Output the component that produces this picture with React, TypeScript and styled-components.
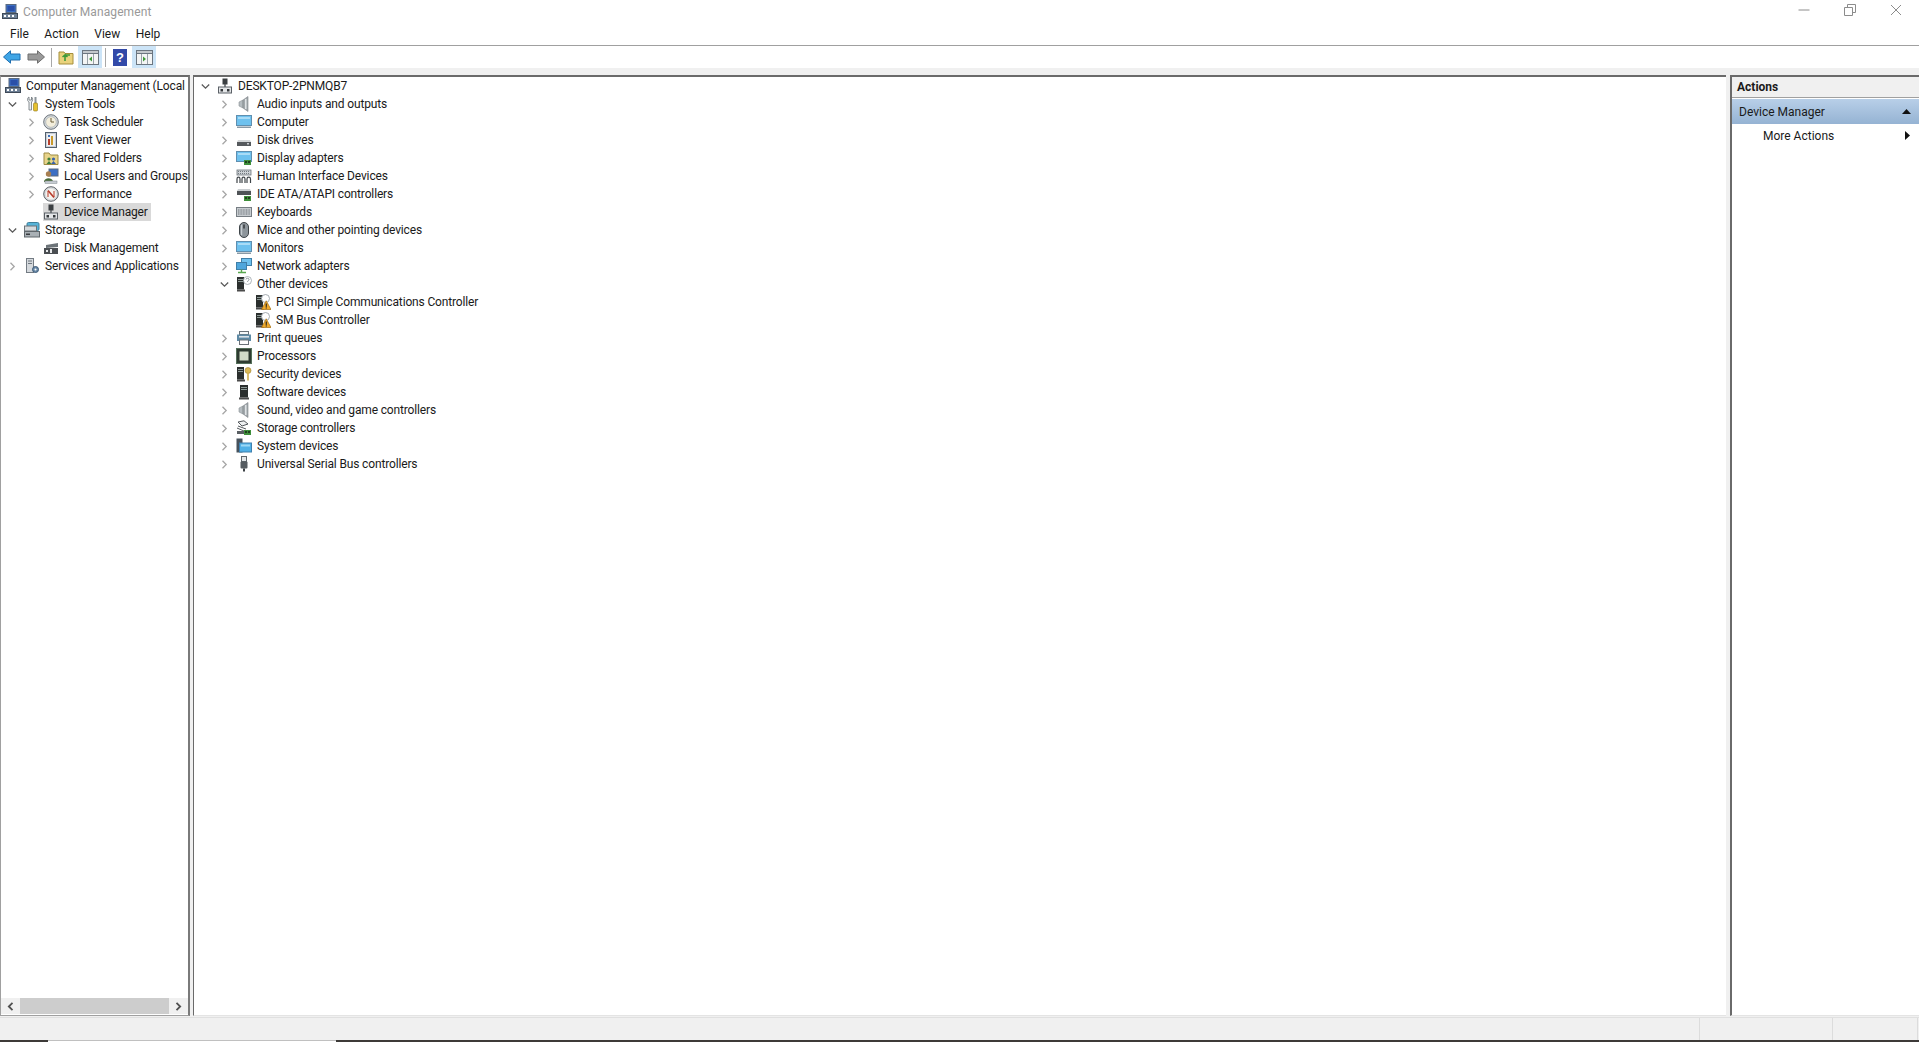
import React from "react"
import styled, { createGlobalStyle } from "styled-components"

const GlobalStyle = createGlobalStyle`
	html, body {
		margin: 0;
		padding: 0;
		background: #ffffff;
		overflow: hidden;
	}
	* {
		box-sizing: border-box;
	}
`

const FONT = `Roboto, "Noto Sans", "Liberation Sans", sans-serif`

/* ---------- icons ---------- */

const Svg = ({ children }: { children: React.ReactNode }) => (
	<svg width="16" height="16" viewBox="0 0 16 16" style={{ flex: "none", display: "block" }}>
		{children}
	</svg>
)

const PcMini = () => (
	<>
		<rect x="4" y="0.5" width="10" height="8" fill="#3c6fc4" stroke="#5a6a80" />
		<rect x="5.5" y="2" width="7" height="5" fill="#2a4fa8" />
		<rect x="0.5" y="9.5" width="15" height="5" fill="#6d7f95" stroke="#3f4a58" />
		<rect x="2" y="11" width="2" height="2" fill="#fff" />
		<rect x="6" y="11" width="2" height="2" fill="#fff" />
		<rect x="10" y="11" width="2" height="2" fill="#fff" />
	</>
)

const Tower = () => (
	<>
		<rect x="1" y="1" width="7" height="12.5" fill="#2b2f2e" />
		<rect x="2" y="3" width="5" height="1" fill="#8d9a96" />
		<rect x="2" y="5" width="5" height="1" fill="#8d9a96" />
		<rect x="1" y="13.5" width="8" height="2" fill="#4b4b4b" />
	</>
)

const Monitor = ({ stand = true }: { stand?: boolean }) => (
	<>
		<rect x="0.5" y="1.5" width="15" height="10" fill="#6ec1ee" stroke="#5f8fb0" />
		<rect x="2" y="3" width="12" height="2" fill="#a9dcf7" />
		{stand && <rect x="1" y="12.5" width="14" height="1.5" fill="#8a9aa6" />}
	</>
)

const Chip = () => (
	<>
		<rect x="8" y="10" width="7" height="5" fill="#3e8e3a" />
		<rect x="9" y="11" width="2" height="2" fill="#203f1e" />
		<rect x="12" y="11" width="2" height="2" fill="#203f1e" />
	</>
)

const Speaker = () => (
	<>
		<path d="M3 6 L7 4 L7 12 L3 10 Z" fill="#b5bcc0" stroke="#8b9296" strokeWidth="0.6" />
		<path d="M7 4 L12 0.5 L12 15.5 L7 12 Z" fill="#a2a8ac" stroke="#7d8388" strokeWidth="0.6" />
		<rect x="9" y="3" width="1.5" height="10" fill="#dfe3e5" />
	</>
)

const icons: Record<string, React.ReactNode> = {
	computer: <PcMini />,
	tools: (
		<>
			<path d="M5 1 C3 2 3 5 5 6 L5 14 L7.5 14 L7.5 6 C9 5 9 2 7.5 1 L7.5 4 L5 4 Z" fill="#eceff1" stroke="#6c7378" strokeWidth="0.8" />
			<rect x="10.5" y="1" width="2" height="6" fill="#8c949a" />
			<rect x="9.5" y="7" width="4" height="8" rx="1" fill="#e6c12f" stroke="#8b7417" strokeWidth="0.6" />
		</>
	),
	clock: (
		<>
			<circle cx="8" cy="8" r="7.3" fill="#d3d8dc" stroke="#6f767c" />
			<circle cx="8" cy="8" r="5.3" fill="#f3eedc" stroke="#a3a9ad" strokeWidth="0.6" />
			<path d="M8 4 L8 8 L11 8" fill="none" stroke="#6a5d37" strokeWidth="1" />
		</>
	),
	event: (
		<>
			<rect x="2.5" y="0.5" width="11" height="15" fill="#c9cfd6" stroke="#53606e" />
			<rect x="4" y="2" width="8" height="12" fill="#eef0f2" />
			<rect x="5" y="7" width="2" height="6" fill="#b7402d" />
			<rect x="8" y="4" width="2" height="9" fill="#c99a2c" />
			<rect x="5" y="3" width="2" height="2" fill="#3d6fb8" />
		</>
	),
	shared: (
		<>
			<path d="M1 3 L6 3 L7.5 5 L15 5 L15 14.5 L1 14.5 Z" fill="#e8d48a" stroke="#9c8a45" />
			<circle cx="6" cy="9" r="1.6" fill="#3f7f3a" />
			<circle cx="10.5" cy="9" r="1.6" fill="#3a62a8" />
			<path d="M3.5 14 L6 11 L8.5 14 Z" fill="#3f7f3a" />
			<path d="M8 14 L10.5 11 L13 14 Z" fill="#3a62a8" />
		</>
	),
	users: (
		<>
			<rect x="6" y="1" width="9" height="7" fill="#3c6fc4" stroke="#5a6a80" />
			<circle cx="5.5" cy="6" r="2.7" fill="#a87f51" />
			<path d="M1 14 C1 9 10 9 10 14 Z" fill="#4a6c3a" />
			<rect x="2" y="13" width="12" height="2.4" fill="#c7cdd3" stroke="#7d858c" strokeWidth="0.5" />
		</>
	),
	perf: (
		<>
			<circle cx="8" cy="8" r="7.3" fill="#d9dcde" stroke="#5c6166" />
			<circle cx="8" cy="8" r="5.2" fill="#f6f3ee" />
			<path d="M5 4.5 L11 11.5" stroke="#b53a2a" strokeWidth="1.6" />
			<path d="M5 11 L5 5 M11 11 L11 5" stroke="#b53a2a" strokeWidth="1" />
		</>
	),
	device: (
		<>
			<rect x="5.5" y="0.5" width="5" height="6" fill="#3b3f42" />
			<path d="M8 6 L8 9" stroke="#505458" strokeWidth="1.4" />
			<rect x="1.5" y="9" width="13" height="6" fill="#e4e6e8" stroke="#5b6066" />
			<rect x="3.5" y="11" width="2.5" height="2.5" fill="#33373a" />
			<rect x="10" y="11" width="2.5" height="2.5" fill="#33373a" />
		</>
	),
	storage: (
		<>
			<rect x="3" y="0.5" width="12" height="8" rx="1.5" fill="#56b3d8" stroke="#3f7f9a" />
			<rect x="0.5" y="4" width="12" height="5" fill="#d5d9dc" stroke="#6c7378" />
			<rect x="0.5" y="9.5" width="15" height="5.5" fill="#a9b0b5" stroke="#5f666b" />
			<rect x="2" y="11.5" width="4" height="1.5" fill="#3a3d40" />
		</>
	),
	diskmgmt: (
		<>
			<path d="M3 5 L15 3 L15 7 L3 8 Z" fill="#6c7378" />
			<rect x="1" y="8" width="14" height="6" fill="#4a4e52" />
			<rect x="7" y="9" width="2" height="4" fill="#e8eaec" />
			<rect x="3" y="10" width="2" height="2" fill="#e8eaec" />
		</>
	),
	services: (
		<>
			<rect x="2.5" y="0.5" width="7" height="14" fill="#d5d9dd" stroke="#737b83" />
			<rect x="4" y="2.5" width="4" height="1" fill="#6e767e" />
			<rect x="4" y="5" width="4" height="1" fill="#6e767e" />
			<circle cx="11.5" cy="11.5" r="3" fill="#6a8aa8" stroke="#3d5a78" />
			<circle cx="11.5" cy="11.5" r="1" fill="#fff" />
		</>
	),
	audio: <Speaker />,
	pc: <Monitor />,
	disk: (
		<>
			<path d="M2 8 L14 8 L15 10 L1 10 Z" fill="#d3d6d8" />
			<rect x="1" y="10" width="14" height="4" fill="#55595d" />
			<rect x="11" y="11" width="2" height="1.5" fill="#c8ccd0" />
		</>
	),
	display: (
		<>
			<Monitor stand={false} />
			<Chip />
		</>
	),
	hid: (
		<>
			<rect x="1" y="2" width="14" height="5" fill="#cdd2d6" stroke="#6d747a" strokeWidth="0.8" />
			<path d="M2 3.5 H14 M2 5.5 H14" stroke="#5e656b" strokeWidth="0.8" strokeDasharray="1 1" />
			<path d="M1 15 V11 C1 8.5 4 8.5 4 11 V15 M6 15 V11 C6 8.5 9 8.5 9 11 V15 M11 15 V11 C11 8.5 14.5 8.5 14.5 11 V15" fill="none" stroke="#3f4549" strokeWidth="1.2" />
		</>
	),
	ide: (
		<>
			<path d="M2 3 L14 3 L15 5 L1 5 Z" fill="#c9cdd0" />
			<rect x="1" y="5" width="14" height="4" fill="#4f5357" />
			<Chip />
		</>
	),
	keyboard: (
		<>
			<rect x="0.5" y="3.5" width="15" height="9" fill="#c7ccd0" stroke="#767d83" />
			<path d="M2 6 H14 M2 8 H14 M2 10 H14" stroke="#6c7379" strokeWidth="1" strokeDasharray="1 0.6" />
		</>
	),
	mouse: (
		<>
			<rect x="3.5" y="0.5" width="9" height="15" rx="4.5" fill="#8d959b" stroke="#3e4448" />
			<rect x="7.3" y="2.5" width="1.4" height="4" fill="#2f3336" />
			<rect x="5" y="3" width="1.2" height="10" fill="#c5cbcf" />
		</>
	),
	monitor: <Monitor />,
	network: (
		<>
			<rect x="5.5" y="0.5" width="10" height="7" fill="#6ec1ee" stroke="#3f7fa8" />
			<rect x="0.5" y="4.5" width="10" height="7" fill="#4fa6dc" stroke="#3f7fa8" />
			<path d="M5.5 11.5 V14 M2 14.5 H10" stroke="#59a84f" strokeWidth="1.4" />
		</>
	),
	other: (
		<>
			<Tower />
			<circle cx="11.5" cy="4.5" r="4" fill="#fff" stroke="#9aa3aa" strokeWidth="0.8" />
			<path d="M10 3.5 C10 1.8 13 1.8 13 3.5 C13 4.6 11.5 4.6 11.5 6" fill="none" stroke="#7f888f" strokeWidth="0.9" />
		</>
	),
	warn: (
		<>
			<Tower />
			<circle cx="10.5" cy="4.5" r="4" fill="#fff" stroke="#8f989f" strokeWidth="0.8" />
			<path d="M6.5 15.5 L11.2 6.8 L16 15.5 Z" fill="#f0a92a" stroke="#a56f12" strokeWidth="0.7" />
			<rect x="10.7" y="9.5" width="1.1" height="3.4" fill="#222" />
			<rect x="10.7" y="13.4" width="1.1" height="1.1" fill="#222" />
		</>
	),
	printer: (
		<>
			<rect x="3.5" y="1.5" width="9" height="3" fill="#f5f7f8" stroke="#6b7278" />
			<path d="M1 4.5 H15 V11 H1 Z" fill="#5e8aa5" />
			<rect x="3" y="6" width="10" height="1.6" fill="#d9e2e8" />
			<rect x="3.5" y="10" width="9" height="4.5" fill="#fff" stroke="#6b7278" />
		</>
	),
	cpu: (
		<>
			<rect x="0.5" y="0.5" width="15" height="15" fill="#2e3b30" stroke="#55705a" />
			<rect x="3.5" y="3.5" width="9" height="9" fill="#d2dcc8" />
		</>
	),
	security: (
		<>
			<Tower />
			<circle cx="12" cy="4.5" r="3" fill="#dcb957" stroke="#9c8230" strokeWidth="0.6" />
			<rect x="11.2" y="7" width="1.6" height="7.5" fill="#d0ad4c" />
		</>
	),
	software: (
		<>
			<rect x="4" y="1" width="8" height="12.5" fill="#2b2f2e" />
			<rect x="5" y="3" width="6" height="1" fill="#8d9a96" />
			<rect x="5" y="5" width="6" height="1" fill="#8d9a96" />
			<rect x="3" y="13.5" width="10" height="2" fill="#4b4b4b" />
		</>
	),
	sound: <Speaker />,
	storagectl: (
		<>
			<path d="M2 2 L8 0.8 L12 4 L6 6 Z" fill="#eef0f1" stroke="#53585c" />
			<path d="M2 6 L10 9 M1 8 L8 11" stroke="#53585c" strokeWidth="1" />
			<rect x="1" y="11" width="7" height="3" fill="#5a5f63" />
			<Chip />
		</>
	),
	system: (
		<>
			<rect x="0.5" y="0.5" width="6" height="14" fill="#47525c" />
			<rect x="3.5" y="5" width="12" height="9" fill="#4fb0e6" stroke="#3f80ae" />
			<rect x="5" y="6.5" width="9" height="2" fill="#9bd8f5" />
		</>
	),
	usb: (
		<>
			<rect x="5.5" y="0.5" width="5" height="5" fill="#e3e6e8" stroke="#5f666b" />
			<rect x="4.5" y="5.5" width="7" height="7" rx="1" fill="#565c61" />
			<rect x="7" y="12.5" width="2" height="3" fill="#3b4044" />
		</>
	),
}

const Chevron = ({ open }: { open: boolean }) => (
	<svg width="9" height="9" viewBox="0 0 9 9">
		{open ? (
			<path d="M0.8 2.5 L4.5 6.2 L8.2 2.5" fill="none" stroke="#5a5a5a" strokeWidth="1.3" />
		) : (
			<path d="M2.5 0.8 L6.2 4.5 L2.5 8.2" fill="none" stroke="#a6a6a6" strokeWidth="1.3" />
		)}
	</svg>
)

/* ---------- tree data ---------- */

type Node = { label: string; icon: string; depth: number; toggle?: "open" | "closed"; selected?: boolean }

const leftTree: Node[] = [
	{ label: "System Tools", icon: "tools", depth: 0, toggle: "open" },
	{ label: "Task Scheduler", icon: "clock", depth: 1, toggle: "closed" },
	{ label: "Event Viewer", icon: "event", depth: 1, toggle: "closed" },
	{ label: "Shared Folders", icon: "shared", depth: 1, toggle: "closed" },
	{ label: "Local Users and Groups", icon: "users", depth: 1, toggle: "closed" },
	{ label: "Performance", icon: "perf", depth: 1, toggle: "closed" },
	{ label: "Device Manager", icon: "device", depth: 1, selected: true },
	{ label: "Storage", icon: "storage", depth: 0, toggle: "open" },
	{ label: "Disk Management", icon: "diskmgmt", depth: 1 },
	{ label: "Services and Applications", icon: "services", depth: 0, toggle: "closed" },
]

const deviceTree: Node[] = [
	{ label: "DESKTOP-2PNMQB7", icon: "device", depth: 0, toggle: "open" },
	{ label: "Audio inputs and outputs", icon: "audio", depth: 1, toggle: "closed" },
	{ label: "Computer", icon: "pc", depth: 1, toggle: "closed" },
	{ label: "Disk drives", icon: "disk", depth: 1, toggle: "closed" },
	{ label: "Display adapters", icon: "display", depth: 1, toggle: "closed" },
	{ label: "Human Interface Devices", icon: "hid", depth: 1, toggle: "closed" },
	{ label: "IDE ATA/ATAPI controllers", icon: "ide", depth: 1, toggle: "closed" },
	{ label: "Keyboards", icon: "keyboard", depth: 1, toggle: "closed" },
	{ label: "Mice and other pointing devices", icon: "mouse", depth: 1, toggle: "closed" },
	{ label: "Monitors", icon: "monitor", depth: 1, toggle: "closed" },
	{ label: "Network adapters", icon: "network", depth: 1, toggle: "closed" },
	{ label: "Other devices", icon: "other", depth: 1, toggle: "open" },
	{ label: "PCI Simple Communications Controller", icon: "warn", depth: 2 },
	{ label: "SM Bus Controller", icon: "warn", depth: 2 },
	{ label: "Print queues", icon: "printer", depth: 1, toggle: "closed" },
	{ label: "Processors", icon: "cpu", depth: 1, toggle: "closed" },
	{ label: "Security devices", icon: "security", depth: 1, toggle: "closed" },
	{ label: "Software devices", icon: "software", depth: 1, toggle: "closed" },
	{ label: "Sound, video and game controllers", icon: "sound", depth: 1, toggle: "closed" },
	{ label: "Storage controllers", icon: "storagectl", depth: 1, toggle: "closed" },
	{ label: "System devices", icon: "system", depth: 1, toggle: "closed" },
	{ label: "Universal Serial Bus controllers", icon: "usb", depth: 1, toggle: "closed" },
]

const TreeRow = ({ node }: { node: Node }) => (
	<Row $depth={node.depth}>
		<ToggleSlot>{node.toggle && <Chevron open={node.toggle === "open"} />}</ToggleSlot>
		<RowLabel $selected={node.selected}>
			<Svg>{icons[node.icon]}</Svg>
			<RowText>{node.label}</RowText>
		</RowLabel>
	</Row>
)

/* ---------- page ---------- */

export default function App() {
	return (
		<>
			<GlobalStyle />
			<Window>
				<TitleBar>
					<TitleLeft>
						<Svg>{icons.computer}</Svg>
						<TitleText>Computer Management</TitleText>
					</TitleLeft>
					<WindowControls>
						<ControlButton>
							<svg width="12" height="12" viewBox="0 0 12 12">
								<path d="M0.5 6 H11.5" stroke="#8c8c8c" />
							</svg>
						</ControlButton>
						<ControlButton>
							<svg width="12" height="12" viewBox="0 0 12 12">
								<path d="M0.5 3.5 H8.5 V11.5 H0.5 Z M3.5 3 V0.5 H11.5 V8.5 H9" fill="none" stroke="#8c8c8c" />
							</svg>
						</ControlButton>
						<ControlButton>
							<svg width="12" height="12" viewBox="0 0 12 12">
								<path d="M1 1 L11 11 M11 1 L1 11" stroke="#8c8c8c" />
							</svg>
						</ControlButton>
					</WindowControls>
				</TitleBar>

				<MenuBar>
					<MenuItem>File</MenuItem>
					<MenuItem>Action</MenuItem>
					<MenuItem>View</MenuItem>
					<MenuItem>Help</MenuItem>
				</MenuBar>

				<Toolbar>
					<ToolButton>
						<svg width="18" height="14" viewBox="0 0 18 14">
							<path d="M0.5 7 L7.5 0.8 V4 H17 V10 H7.5 V13.2 Z" fill="#3fa5e6" stroke="#1f6fb0" />
						</svg>
					</ToolButton>
					<ToolButton>
						<svg width="18" height="14" viewBox="0 0 18 14">
							<path d="M17.5 7 L10.5 0.8 V4 H1 V10 H10.5 V13.2 Z" fill="#9a9a9a" stroke="#6e6e6e" />
						</svg>
					</ToolButton>
					<ToolSeparator />
					<ToolButton>
						<svg width="16" height="16" viewBox="0 0 16 16">
							<path d="M1 3 H6 L7 4.5 H15 V15 H1 Z" fill="#e9d27c" stroke="#a68f3c" />
							<path d="M7 12 V6 L4.5 8 M7 6 L9.5 8 M7 6 H12" fill="none" stroke="#3f9a3a" strokeWidth="1.6" />
						</svg>
					</ToolButton>
					<ToolButton $active>
						<svg width="17" height="15" viewBox="0 0 17 15">
							<rect x="0.5" y="0.5" width="16" height="14" fill="#f4f5f5" stroke="#6c7680" />
							<rect x="0.5" y="0.5" width="16" height="3" fill="#c3c8cc" stroke="#6c7680" />
							<path d="M5.5 4 V14 M11.5 4 V14" stroke="#9aa2a9" />
							<path d="M10 6.5 L7 9 L10 11.5 Z" fill="#3f9a3a" />
						</svg>
					</ToolButton>
					<ToolSeparator />
					<ToolButton>
						<svg width="14" height="17" viewBox="0 0 14 17">
							<rect width="14" height="17" fill="#3249a8" />
							<text x="7" y="13" fontFamily="Liberation Sans" fontWeight="700" fontSize="13" fill="#fff" textAnchor="middle">?</text>
						</svg>
					</ToolButton>
					<ToolButton $active>
						<svg width="17" height="15" viewBox="0 0 17 15">
							<rect x="0.5" y="0.5" width="16" height="14" fill="#f4f5f5" stroke="#6c7680" />
							<rect x="0.5" y="0.5" width="16" height="3" fill="#c3c8cc" stroke="#6c7680" />
							<path d="M5.5 4 V14 M11.5 4 V14" stroke="#9aa2a9" />
							<path d="M7 6.5 L10 9 L7 11.5 Z" fill="#3f9a3a" />
						</svg>
					</ToolButton>
				</Toolbar>

				<Panes>
					<LeftPane>
						<TreeArea>
							<RootRow>
								<Svg>{icons.computer}</Svg>
								<RowText>Computer Management (Local</RowText>
							</RootRow>
							{leftTree.map((n) => (
								<TreeRow key={n.label} node={n} />
							))}
						</TreeArea>
						<ScrollBar>
							<ScrollArrow>
								<svg width="9" height="9" viewBox="0 0 9 9">
									<path d="M6.5 0.8 L2.8 4.5 L6.5 8.2" fill="none" stroke="#505050" strokeWidth="1.8" />
								</svg>
							</ScrollArrow>
							<ScrollThumb />
							<ScrollArrow>
								<svg width="9" height="9" viewBox="0 0 9 9">
									<path d="M2.5 0.8 L6.2 4.5 L2.5 8.2" fill="none" stroke="#505050" strokeWidth="1.8" />
								</svg>
							</ScrollArrow>
						</ScrollBar>
					</LeftPane>

					<CenterPane>
						{deviceTree.map((n) => (
							<TreeRow key={n.label} node={n} />
						))}
					</CenterPane>

					<ActionsPane>
						<ActionsHeader>Actions</ActionsHeader>
						<ActionsGroup>
							<span>Device Manager</span>
							<svg width="9" height="5" viewBox="0 0 9 5">
								<path d="M0 5 L4.5 0 L9 5 Z" fill="#111" />
							</svg>
						</ActionsGroup>
						<ActionItem>
							<span>More Actions</span>
							<svg width="5" height="9" viewBox="0 0 5 9">
								<path d="M0 0 L5 4.5 L0 9 Z" fill="#111" />
							</svg>
						</ActionItem>
					</ActionsPane>
				</Panes>

				<StatusBar>
					<StatusCell $width={1700} />
					<StatusCell $width={133} />
					<StatusCell $width={85} />
				</StatusBar>

				<BottomEdge>
					<EdgeSegment $width={48} $color="#3d3a38" />
					<LightSegment />
					<DarkRest />
				</BottomEdge>
			</Window>
		</>
	)
}

const Window = styled.div`
	width: 1919px;
	height: 1042px;
	display: flex;
	flex-direction: column;
	background: #ffffff;
	font-family: ${FONT};
	font-size: 12px;
	color: #1a1a1a;
	overflow: hidden;
`

const TitleBar = styled.div`
	height: 23px;
	flex: none;
	display: flex;
	align-items: center;
	justify-content: space-between;
`

const TitleLeft = styled.div`
	display: flex;
	align-items: center;
	gap: 5px;
	padding-left: 2px;
`

const TitleText = styled.span`
	color: #999999;
	letter-spacing: 0.1px;
`

const WindowControls = styled.div`
	display: flex;
	height: 100%;
	align-items: center;
`

const ControlButton = styled.div`
	width: 46px;
	display: flex;
	justify-content: center;
	margin-top: -4px;
`

const MenuBar = styled.div`
	height: 23px;
	flex: none;
	display: flex;
	align-items: center;
	gap: 1.5px;
	padding-left: 3px;
	border-bottom: 1px solid #a0a0a0;
`

const MenuItem = styled.span`
	padding: 0 7px;
`

const Toolbar = styled.div`
	height: 22px;
	flex: none;
	display: flex;
	align-items: center;
	background: #ffffff;
`

const ToolButton = styled.div<{ $active?: boolean }>`
	width: 24px;
	height: 22px;
	display: flex;
	align-items: center;
	justify-content: center;
	background: ${(p) => (p.$active ? "#cce4f7" : "transparent")};
`

const ToolSeparator = styled.div`
	width: 1px;
	height: 19px;
	margin: 0 2px 0 3px;
	background: #a8a8a8;
`

const Panes = styled.div`
	flex: 1;
	min-height: 0;
	display: flex;
	gap: 3px;
	padding-top: 7px;
	padding-bottom: 1px;
	background: #f0f0f0;
`

const LeftPane = styled.div`
	width: 190px;
	flex: none;
	display: flex;
	flex-direction: column;
	background: #ffffff;
	border: 1px solid #a0a0a0;
	border-top: 2px solid #6a6a6a;
	border-right: 2px solid #7a7a7a;
`

const TreeArea = styled.div`
	flex: 1;
	min-height: 0;
	overflow: hidden;
	white-space: nowrap;
`

const RootRow = styled.div`
	height: 18px;
	display: flex;
	align-items: center;
	gap: 5px;
	padding-left: 4px;
`

const Row = styled.div<{ $depth: number }>`
	height: 18px;
	display: flex;
	align-items: center;
	padding-left: ${(p) => 3 + p.$depth * 19}px;
`

const ToggleSlot = styled.span`
	width: 20px;
	flex: none;
	display: flex;
	align-items: center;
	justify-content: center;
	padding-right: 3px;
`

const RowLabel = styled.span<{ $selected?: boolean }>`
	height: 18px;
	display: flex;
	align-items: center;
	gap: 5px;
	padding-right: 3px;
	background: ${(p) => (p.$selected ? "#d9d9d9" : "transparent")};
`

const RowText = styled.span`
	white-space: nowrap;
	letter-spacing: -0.15px;
`

const ScrollBar = styled.div`
	height: 16px;
	flex: none;
	margin-bottom: 1px;
	display: flex;
	align-items: stretch;
	background: #f0f0f0;
`

const ScrollArrow = styled.div`
	width: 19px;
	flex: none;
	display: flex;
	align-items: center;
	justify-content: center;
`

const ScrollThumb = styled.div`
	flex: 1;
	background: #cdcdcd;
`

const CenterPane = styled.div`
	width: 1533px;
	flex: none;
	background: #ffffff;
	border-top: 2px solid #6a6a6a;
	border-left: 1px solid #6a6a6a;
	border-bottom: 1px solid #e4e4e4;
	overflow: hidden;
	white-space: nowrap;
`

const ActionsPane = styled.div`
	flex: 1;
	min-width: 0;
	margin-left: 1px;
	background: #ffffff;
	border-top: 2px solid #6a6a6a;
	border-left: 2px solid #6a6a6a;
	border-bottom: 1px solid #e4e4e4;
`

const ActionsHeader = styled.div`
	height: 21px;
	display: flex;
	align-items: center;
	padding-left: 5px;
	font-weight: 700;
	background: #f0f0f0;
	border-bottom: 1px solid #a0a0a0;
`

const ActionsGroup = styled.div`
	height: 25px;
	margin-top: 1px;
	display: flex;
	align-items: center;
	justify-content: space-between;
	padding: 0 8px 0 7px;
	background: linear-gradient(#b8cfe8, #95b3d3);
`

const ActionItem = styled.div`
	height: 23px;
	display: flex;
	align-items: center;
	justify-content: space-between;
	padding: 0 9px 0 31px;
`

const StatusBar = styled.div`
	height: 23px;
	flex: none;
	display: flex;
	background: #f0f0f0;
	border-top: 1px solid #e0e0e0;
`

const StatusCell = styled.div<{ $width: number }>`
	width: ${(p) => p.$width}px;
	flex: none;
	border-right: 1px solid #dcdcdc;
`

const BottomEdge = styled.div`
	height: 2px;
	flex: none;
	display: flex;
`

const EdgeSegment = styled.div<{ $width: number; $color: string }>`
	width: ${(p) => p.$width}px;
	flex: none;
	background: ${(p) => p.$color};
`

const LightSegment = styled.div`
	width: 288px;
	flex: none;
	background: #ffffff;
	border-top: 1px solid #c0c0c0;
`

const DarkRest = styled.div`
	flex: 1;
	background: #3d3a38;
`
